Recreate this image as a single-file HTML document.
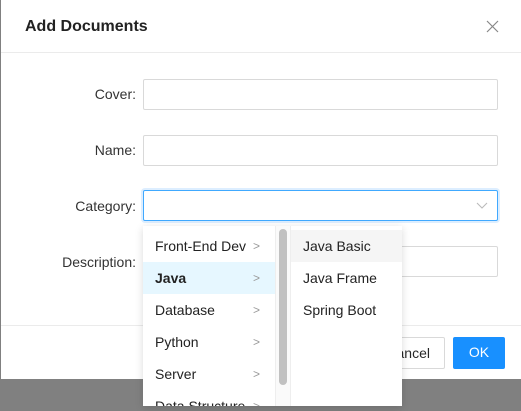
<!DOCTYPE html>
<html><head><style>
*{box-sizing:border-box;margin:0;padding:0}
body{width:521px;height:411px;overflow:hidden;background:#808080;font-family:"Liberation Sans",sans-serif;position:relative;color:rgba(0,0,0,.85);font-size:14px}
.modal{position:absolute;left:1px;top:0;width:520px;height:379px;background:#fff}
.hd{position:absolute;left:0;top:0;width:100%;height:53px;border-bottom:1px solid #ebebeb}
.title{position:absolute;left:24px;top:18px;font-size:16px;font-weight:bold;color:#222}
.x{position:absolute;left:485px;top:20px}
.lbl{position:absolute;right:385px;font-size:14px;color:#333;white-space:nowrap}
.inp{position:absolute;left:142px;width:355px;height:31px;border:1px solid #d9d9d9;border-radius:2px;background:#fff}
.ft{position:absolute;left:0;top:325px;width:100%;border-top:1px solid #ebebeb}
.btn{position:absolute;top:337px;height:32px;border-radius:2px;font-size:14px;line-height:30px;text-align:center}
.dd{position:absolute;left:143px;top:226px;width:259px;height:180px;background:#fff;box-shadow:0 2px 8px rgba(0,0,0,.15);overflow:hidden}
.c1{position:absolute;left:0;top:0;width:133px;height:100%;border-right:1px solid #eee;padding-top:4px}
.sb{position:absolute;left:133px;top:0;width:15px;height:100%;background:#fafafa;border-right:1px solid #eee}
.th{position:absolute;left:3px;top:3px;width:8px;height:156px;border-radius:4px;background:#c1c1c1}
.c2{position:absolute;left:148px;top:0;width:111px;height:100%;padding-top:4px}
.r{height:32px;line-height:32px;padding-left:12px;position:relative;white-space:nowrap;color:#222}
.r .a{position:absolute;left:110px;top:0;color:#999;font-size:12px}
</style></head><body>
<div class="modal">
<div class="hd"><div class="title">Add Documents</div>
<svg class="x" width="13" height="13" viewBox="0 0 13 13"><path d="M1 1L12 12M12 1L1 12" stroke="#888" stroke-width="1.2"/></svg></div>
<div class="lbl" style="top:86px">Cover:</div><div class="inp" style="top:79px"></div>
<div class="lbl" style="top:142px">Name:</div><div class="inp" style="top:135px"></div>
<div class="lbl" style="top:198px">Category:</div><div class="inp" style="top:190px;border-color:#40a9ff;box-shadow:0 0 0 2px rgba(24,144,255,.15)">
<svg style="position:absolute;right:9px;top:11px" width="12" height="8" viewBox="0 0 12 8"><path d="M1 1L6 6L11 1" stroke="#bbb" fill="none" stroke-width="1.1"/></svg></div>
<div class="lbl" style="top:254px">Description:</div><div class="inp" style="top:246px"></div>
<div class="ft"></div>
<div class="btn" style="left:370px;width:74px;border:1px solid #d9d9d9;text-align:right;padding-right:14px">Cancel</div>
<div class="btn" style="left:452px;width:52px;background:#1890ff;color:#fff">OK</div>
</div>
<div class="dd">
<div class="c1">
<div class="r">Front-End Dev<span class="a">&gt;</span></div>
<div class="r" style="background:#e6f7ff;font-weight:bold">Java<span class="a" style="font-weight:normal">&gt;</span></div>
<div class="r">Database<span class="a">&gt;</span></div>
<div class="r">Python<span class="a">&gt;</span></div>
<div class="r">Server<span class="a">&gt;</span></div>
<div class="r">Data Structure<span class="a">&gt;</span></div>
</div>
<div class="sb"><div class="th"></div></div>
<div class="c2">
<div class="r" style="background:#f5f5f5">Java Basic</div>
<div class="r">Java Frame</div>
<div class="r">Spring Boot</div>
</div>
</div>
</body></html>
